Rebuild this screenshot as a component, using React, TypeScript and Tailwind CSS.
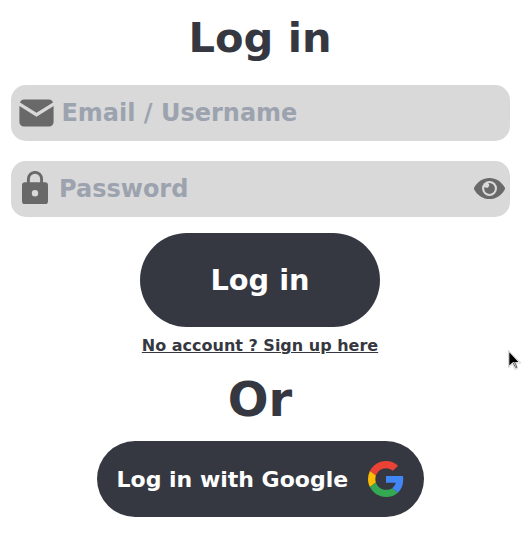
import React from "react";

function MailIcon() {
  return (
    <svg className="h-7 w-[35px] shrink-0" viewBox="0 0 35 28">
      <path fill="#696969" d="M5 .4h25A4.400 4.400 0 0 1 34 3.400L17.500 13.700 1 3.400A4.400 4.400 0 0 1 5 .4Z" />
      <path fill="#696969" d="M.4 7 17.500 17.700 34.600 7V23a4.600 4.600 0 0 1-4.600 4.600H5A4.600 4.600 0 0 1 .4 23Z" />
    </svg>
  );
}

function LockIcon() {
  return (
    <svg className="mb-[3px] h-[33px] w-[26px] shrink-0" viewBox="0 0 26 33">
      <path d="M6.400 12V8a6.600 6.600 0 0 1 13.200 0v4" fill="none" stroke="#696969" strokeWidth="2.900" />
      <path fill="#696969" fillRule="evenodd" d="M3 11.300h20a3 3 0 0 1 3 3v16a3 3 0 0 1-3 3H3a3 3 0 0 1-3-3V14.300a3 3 0 0 1 3-3ZM13 19a3.200 3.200 0 1 0 0 6.400 3.200 3.200 0 0 0 0-6.400Z" />
    </svg>
  );
}

function EyeIcon() {
  return (
    <svg className="mb-px h-[21px] w-[31px] shrink-0" viewBox="0 0 31 21">
      <path fill="#696969" d="M.2 9.600C3.300 3.800 9 0 15.500 0S27.700 3.800 30.800 9.600a2 2 0 0 1 0 1.800C27.700 17.200 22 21 15.500 21S3.300 17.200.2 11.400a2 2 0 0 1 0-1.800Z" />
      <circle cx="15.500" cy="10.500" r="7.500" fill="#d9d9d9" />
      <path fill="#696969" d="M15.500 5.100a5.400 5.400 0 1 1-5.200 4c1.600 1 3.200.8 4.200-.2 1-1.100 1.100-2.600-.4-3.600.4-.1.900-.2 1.400-.2Z" />
    </svg>
  );
}

function GoogleIcon() {
  return (
    <svg className="h-9 w-9 shrink-0" viewBox="0 0 48 48">
      <path fill="#EA4335" d="M24 9.500c3.540 0 6.710 1.220 9.210 3.600l6.850-6.850C35.900 2.380 30.470 0 24 0 14.620 0 6.510 5.380 2.560 13.220l7.980 6.190C12.430 13.720 17.740 9.500 24 9.500z" />
      <path fill="#4285F4" d="M46.980 24.550c0-1.570-.15-3.090-.38-4.550H24v9.020h12.940c-.58 2.960-2.260 5.480-4.780 7.180l7.730 6c4.510-4.180 7.090-10.360 7.090-17.650z" />
      <path fill="#FBBC05" d="M10.530 28.590A14.500 14.500 0 0 1 9.770 24c0-1.600.27-3.140.76-4.590l-7.980-6.190A23.900 23.900 0 0 0 0 24c0 3.880.92 7.540 2.560 10.780l7.970-6.190z" />
      <path fill="#34A853" d="M24 48c6.480 0 11.930-2.130 15.890-5.810l-7.730-6c-2.150 1.450-4.920 2.300-8.160 2.300-6.260 0-11.570-4.220-13.470-9.910l-7.980 6.190C6.510 42.620 14.620 48 24 48z" />
    </svg>
  );
}

function Cursor() {
  return (
    <svg className="absolute left-[508px] top-[350px] h-5 w-[14px]" viewBox="0 0 14 20">
      <path d="M.5.5v17l4-3.500 2.600 5.500 2.700-1.200-2.500-5.300h5.500Z" fill="#fff" stroke="#bbb" strokeWidth=".6" />
      <path d="M1.300 2.200v13.300l3.500-3.200 5.600-.3Z" fill="#000" />
      <path d="m5 12.500 2.700 5.200 1.200-.6-2.400-5.100" fill="#fff" stroke="#333" strokeWidth=".8" />
    </svg>
  );
}

export default function App() {
  return (
    <main className="relative flex h-[544px] w-[526px] flex-col items-center overflow-hidden bg-white pr-[6px] font-['DejaVu_Sans',sans-serif] font-bold text-[#363841]">
      <h1 className="mt-[13px] h-[72px] text-[41.600px] leading-[50px]">Log in</h1>
      <form className="ml-px flex w-[499px] flex-col items-center" onSubmit={(e) => e.preventDefault()}>
        <label className="flex h-14 w-full items-center rounded-[15px] bg-[#d9d9d9] pl-2">
          <MailIcon />
          <input className="ml-[7.400px] min-w-0 flex-1 bg-transparent text-2xl outline-none placeholder:text-[#9ca3af] placeholder:opacity-100" placeholder="Email / Username" />
        </label>
        <label className="mt-5 flex h-14 w-full items-center rounded-[15px] bg-[#d9d9d9] pl-[11px] pr-[5px]">
          <LockIcon />
          <input type="password" className="ml-[11px] min-w-0 flex-1 bg-transparent text-2xl outline-none placeholder:text-[#9ca3af] placeholder:opacity-100" placeholder="Password" />
          <EyeIcon />
        </label>
        <button className="mr-px mt-4 h-[94px] w-60 rounded-full bg-[#363841] pt-px text-[28.800px] text-white">Log in</button>
      </form>
      <a className="mt-[7px] whitespace-nowrap text-base leading-6 underline" href="#">No account ? Sign up here</a>
      <h2 className="mt-[13px] h-[70px] text-5xl leading-[56px]">Or</h2>
      <button className="ml-px flex h-[76px] w-[327px] items-center justify-between whitespace-nowrap rounded-full bg-[#363841] pl-[19.500px] pr-5 text-[22px] text-white">
        Log in with Google
        <GoogleIcon />
      </button>
      <Cursor />
    </main>
  );
}
